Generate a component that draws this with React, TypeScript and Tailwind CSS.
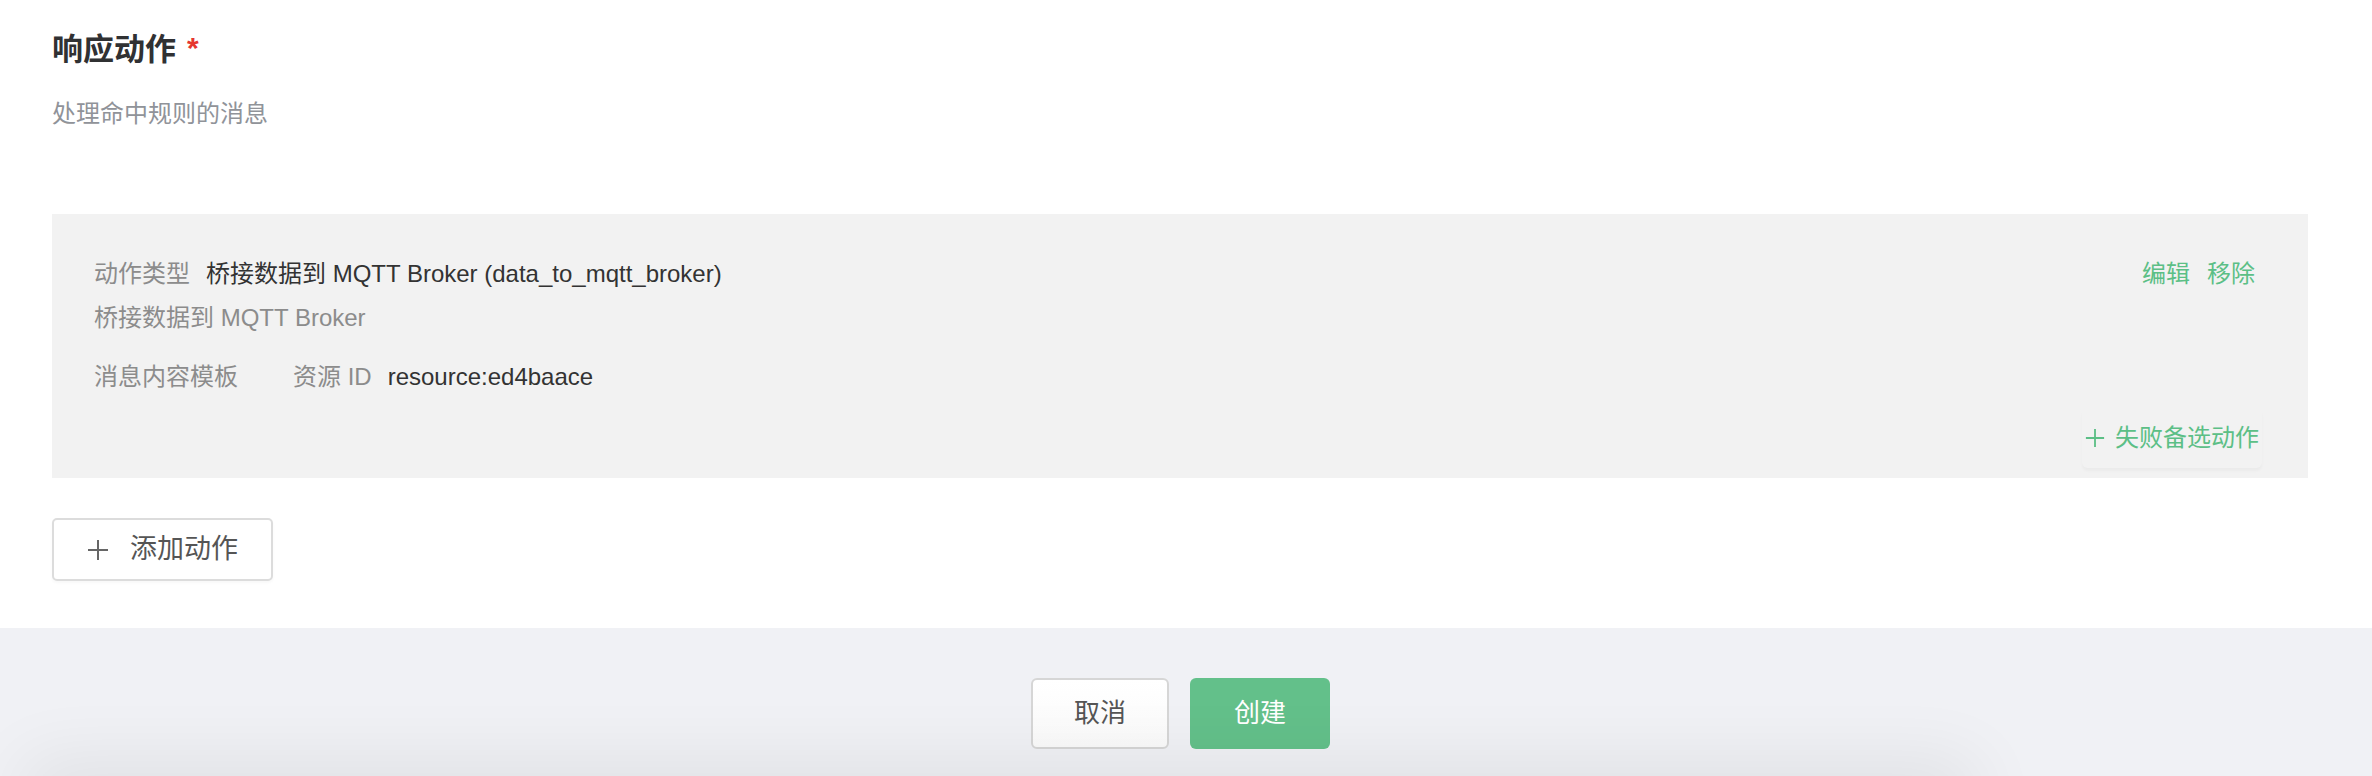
import React from 'react';

const FONT = "font-['Liberation_Sans','Noto_Sans_CJK_SC',sans-serif]";

function PlusIcon({ size, color, stroke = 2 }: { size: number; color: string; stroke?: number }) {
  return (
    <svg width={size} height={size} viewBox="0 0 22 22" fill="none" stroke={color} strokeWidth={stroke}>
      <path d="M11 1v20M1 11h20" />
    </svg>
  );
}

function Field({ label, value, className = '' }: { label: string; value?: string; className?: string }) {
  return (
    <div className={`flex items-center gap-[16px] ${className}`}>
      <span className="text-[#8c8c8c]">{label}</span>
      {value && <span className="text-[#333333]">{value}</span>}
    </div>
  );
}

function ActionCard() {
  return (
    <div className="mt-[82px] h-[264px] bg-[#f2f2f2] pl-[42px] pr-[46px] pt-[42px] pb-[10px] flex justify-between text-[24px] leading-[36px]">
      {/* 左侧：动作信息 */}
      <div className="flex flex-col">
        <Field label="动作类型" value="桥接数据到 MQTT Broker (data_to_mqtt_broker)" />
        <div className="mt-[8px] text-[#8c8c8c]">桥接数据到 MQTT Broker</div>
        <div className="mt-[23px] flex items-center">
          <Field label="消息内容模板" className="mr-[55px]" />
          <Field label="资源 ID" value="resource:ed4baace" />
        </div>
      </div>

      {/* 右侧：操作 */}
      <div className="flex flex-col items-end justify-between">
        <div className="flex items-center gap-[17px] mr-[7px] text-[#5cbf86]">
          <span>编辑</span>
          <span>移除</span>
        </div>
        <button className="h-[60px] px-[3px] rounded-md flex items-center gap-[10px] text-[#5cbf86] shadow-[0_3px_3px_rgba(0,0,0,0.03)]">
          <PlusIcon size={20} color="#5cbf86" />
          <span>失败备选动作</span>
        </button>
      </div>
    </div>
  );
}

export default function App() {
  return (
    <div className={`relative w-full h-[776px] overflow-hidden flex flex-col ${FONT}`}>
      <section className="h-[628px] bg-white pl-[52px] pr-[64px] pt-[28px] shrink-0">
        <h2 className="flex items-start text-[31px] leading-[44px] font-bold text-[#303133]">
          响应动作
          <span className="ml-[11px] text-[30px] leading-[40px] text-[#e5362f]">*</span>
        </h2>
        <div className="mt-[24px] text-[24px] leading-[36px] text-[#909399]">处理命中规则的消息</div>

        <ActionCard />

        <button className="mt-[40px] w-[221px] h-[63px] rounded-[5px] border-2 border-[#dcdcdc] bg-white flex items-center justify-center gap-[21px] text-[27px] text-[#555555] shadow-[0_2px_3px_rgba(0,0,0,0.03)]">
          <PlusIcon size={22} color="#666666" />
          <span>添加动作</span>
        </button>
      </section>

      <footer className="flex-1 bg-[#f0f1f5] flex justify-center pt-[50px] pr-[11px]">
        <div className="flex gap-[21px] text-[26px]">
          <button className="w-[138px] h-[71px] rounded-[6px] border-2 border-[#d6d6d6] bg-gradient-to-b from-white to-[#fafafa] text-[#555555]">
            取消
          </button>
          <button className="w-[140px] h-[71px] rounded-[6px] bg-[#63c08a] text-white">
            创建
          </button>
        </div>
      </footer>

      {/* 底部阴影 */}
      <div className="absolute left-[40px] w-[1920px] top-full h-[40px] shadow-[0_0_70px_16px_rgba(0,0,0,0.07)]" />
    </div>
  );
}
